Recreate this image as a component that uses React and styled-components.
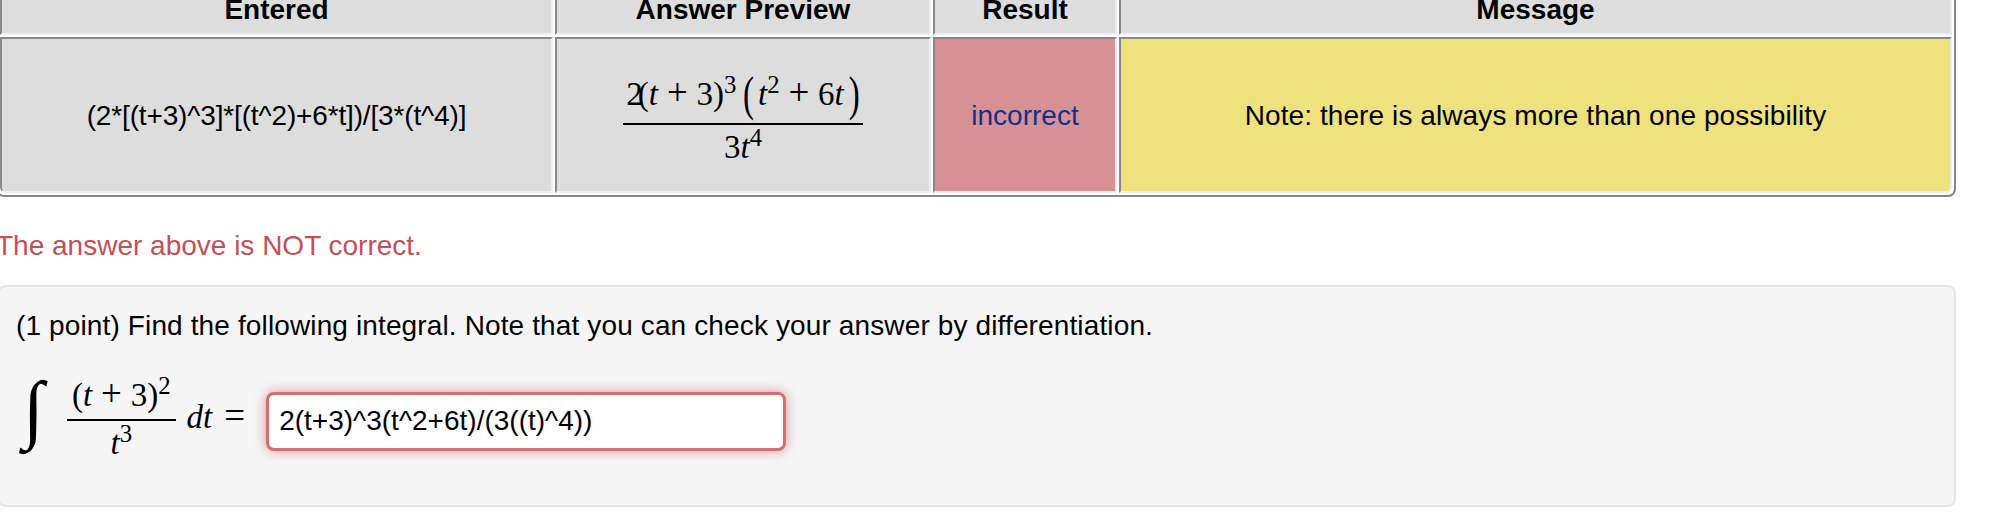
import React from 'react';
import styled, { createGlobalStyle } from 'styled-components';

const GlobalStyle = createGlobalStyle`
    html, body {
        margin: 0;
        height: 516px;
        overflow: hidden;
        background: #fff;
    }
    body {
        font-family: "Liberation Sans", Arial, sans-serif;
        font-size: 28px;
        line-height: 40px;
        color: #000;
    }
`;

const Page = styled.div`
    width: 1960px;
    margin: -19px 0 0 -4px;
`;

const ResultsTable = styled.table`
    width: 1960px;
    table-layout: fixed;
    border-collapse: separate;
    border-spacing: 2px;
    border: 2px solid #888;
    border-radius: 8px;
`;

const HeadCell = styled.th`
    height: 46px;
    padding: 0;
    background: #ddd;
    font-weight: bold;
    text-align: center;
    vertical-align: middle;
    border: 2px solid;
    border-color: #888 #eee #eee #888;
`;

const BodyCell = styled.td`
    height: 156px;
    box-sizing: border-box;
    padding: ${props => props.$pushDown || 2}px 0 0;
    background: ${props => props.$background || '#ddd'};
    color: ${props => props.$color || '#000'};
    letter-spacing: ${props => props.$track || 0}px;
    text-align: center;
    vertical-align: middle;
    border: 2px solid;
    border-color: #888 #eee #eee #888;
    border-bottom-left-radius: ${props => (props.$first ? '6px' : 0)};
    border-bottom-right-radius: ${props => (props.$last ? '6px' : 0)};
`;

const Verdict = styled.p`
    margin: 29px 0 19px;
    color: #c45056;
`;

const Well = styled.section`
    height: 199px;
    width: 1938px;
    margin-left: 2px;
    padding: 19px 0 0 16px;
    box-sizing: content-box;
    background: #f5f5f5;
    border: 2px solid #e6e6e6;
    border-radius: 8px;
`;

const Question = styled.div`
    letter-spacing: 0.13px;
`;

const MathRow = styled.div`
    display: flex;
    align-items: center;
    height: 80px;
    margin-top: 35px;
    font-family: "Liberation Serif", "Times New Roman", serif;
    font-size: 33px;
`;

const IntegralSlot = styled.span`
    width: 51px;
    height: 80px;
`;

const Integral = styled.span`
    display: block;
    font-size: 76px;
    font-style: italic;
    line-height: 80px;
    transform: translate(7px, -13px);
`;

const Frac = styled.span`
    display: inline-flex;
    flex-direction: column;
    align-items: stretch;
    text-align: center;
    padding-bottom: ${props => props.$lift || 0}px;
    font-family: "Liberation Serif", "Times New Roman", serif;
    font-size: ${props => props.$size}px;
    letter-spacing: 0;
`;

const Num = styled.span`
    display: block;
    line-height: ${props => props.$line}px;
    padding: 0 ${props => props.$side || 0}px ${props => props.$gap}px;
    border-bottom: 2px solid #000;
    white-space: nowrap;
`;

const Den = styled.span`
    display: block;
    line-height: ${props => props.$line}px;
    padding-top: ${props => props.$gap}px;
    white-space: nowrap;
`;

const V = styled.i`
    font-style: italic;
`;

const Sup = styled.sup`
    font-size: 0.75em;
    line-height: 0;
    vertical-align: 0.5em;
`;

const Op = styled.span`
    margin: 0 0.24em;
    font-size: 1.12em;
    line-height: 0;
`;

const Overlap = styled.span`
    margin-left: -0.15em;
`;

const BigParen = styled.span`
    display: inline-block;
    line-height: 0;
    transform: scale(1, 1.45);
    margin: 0 ${props => props.$inner || 0}em 0 ${props => props.$outer || 0}em;
`;

const AfterFrac = styled.span`
    margin-left: 11px;
    padding-bottom: 8px;
    white-space: nowrap;
`;

const Equals = styled.span`
    margin: 0 12px;
    font-size: 37px;
    line-height: 0;
`;

const AnswerBox = styled.input`
    width: 520px;
    height: 59px;
    margin-left: 9px;
    padding: 0 10px;
    box-sizing: border-box;
    font-family: "Liberation Sans", Arial, sans-serif;
    font-size: 28px;
    color: #000;
    background: #fff;
    border: 3px solid #cf7074;
    border-radius: 8px;
    outline: none;
    box-shadow: 0 0 12px rgba(200, 70, 75, 0.55);
`;

const columns = [553, 376, 184, 833];
const headings = ['Entered', 'Answer Preview', 'Result', 'Message'];

export default function App() {
    return (
        <Page>
            <GlobalStyle />
            <ResultsTable>
                <colgroup>
                    {columns.map((width) => <col key={width} style={{ width }} />)}
                </colgroup>
                <thead>
                    <tr>
                        {headings.map((text) => <HeadCell key={text}>{text}</HeadCell>)}
                    </tr>
                </thead>
                <tbody>
                    <tr>
                        <BodyCell $first $track={-0.15}>(2*[(t+3)^3]*[(t^2)+6*t])/[3*(t^4)]</BodyCell>
                        <BodyCell $pushDown={11}>
                            <Frac $size={33}>
                                <Num $line={40} $gap={9} $side={3}>
                                    2<Overlap>(</Overlap><V>t</V><Op>+</Op>3)<Sup>3</Sup>
                                    <BigParen $outer={0.2} $inner={0.12}>(</BigParen>
                                    <V>t</V><Sup>2</Sup><Op>+</Op>6<V>t</V>
                                    <BigParen $outer={0.15}>)</BigParen>
                                </Num>
                                <Den $line={40} $gap={2}>3<V>t</V><Sup>4</Sup></Den>
                            </Frac>
                        </BodyCell>
                        <BodyCell $background="#d79093" $color="#10318f">incorrect</BodyCell>
                        <BodyCell $last $track={0.09} $background="#eee27e">Note: there is always more than one possibility</BodyCell>
                    </tr>
                </tbody>
            </ResultsTable>

            <Verdict>The answer above is NOT correct.</Verdict>

            <Well>
                <Question>(1 point) Find the following integral. Note that you can check your answer by differentiation.</Question>
                <MathRow>
                    <IntegralSlot><Integral>∫</Integral></IntegralSlot>
                    <Frac $size={33} $lift={5}>
                        <Num $line={40} $gap={4} $side={5}>(<V>t</V><Op>+</Op>3)<Sup>2</Sup></Num>
                        <Den $line={40} $gap={2}><V>t</V><Sup>3</Sup></Den>
                    </Frac>
                    <AfterFrac><V>dt</V><Equals>=</Equals></AfterFrac>
                    <AnswerBox readOnly defaultValue="2(t+3)^3(t^2+6t)/(3((t)^4))" />
                </MathRow>
            </Well>
        </Page>
    );
}
